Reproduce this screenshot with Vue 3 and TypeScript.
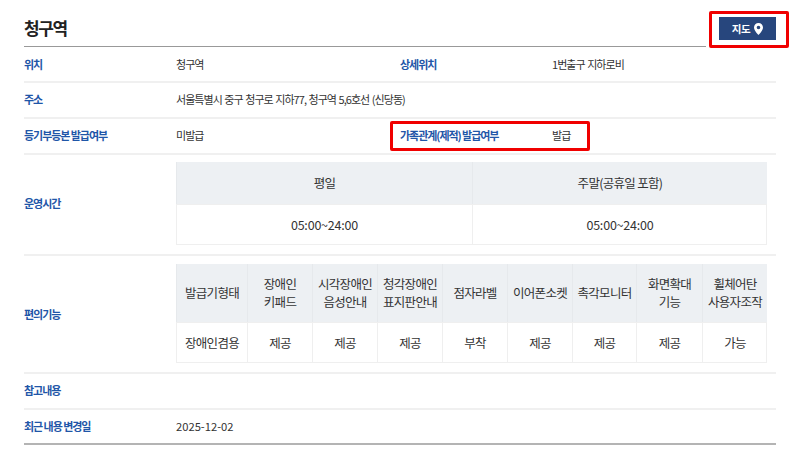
<script setup lang="ts">
const features: { head: string[]; value: string }[] = [
  { head: ['발급기형태'], value: '장애인겸용' },
  { head: ['장애인', '키패드'], value: '제공' },
  { head: ['시각장애인', '음성안내'], value: '제공' },
  { head: ['청각장애인', '표지판안내'], value: '제공' },
  { head: ['점자라벨'], value: '부착' },
  { head: ['이어폰소켓'], value: '제공' },
  { head: ['촉각모니터'], value: '제공' },
  { head: ['화면확대', '기능'], value: '제공' },
  { head: ['휠체어탄', '사용자조작'], value: '가능' },
]
</script>

<template>
  <div class="page">
    <header class="top">
      <h1 class="title">청구역</h1>
      <button class="map" type="button">
        <span>지도</span>
        <svg width="9" height="12" viewBox="0 0 9 12" aria-hidden="true">
          <path fill-rule="evenodd" fill="#fff" d="M4.5 0C2 0 0 2 0 4.5 0 7.5 4.5 12 4.5 12S9 7.500 9 4.500C9 2 7 0 4.500 0ZM4.500 2.700a1.800 1.800 0 1 1 0 3.600 1.800 1.800 0 0 1 0-3.600Z" />
        </svg>
      </button>
    </header>

    <div class="row h36 first">
      <div class="label">위치</div>
      <div class="value half">청구역</div>
      <div class="label">상세위치</div>
      <div class="value">1번출구 지하로비</div>
    </div>
    <div class="row h36">
      <div class="label">주소</div>
      <div class="value">서울특별시 중구 청구로 지하77, 청구역 5,6호선 (신당동)</div>
    </div>
    <div class="row h36">
      <div class="label">등기부등본 발급여부</div>
      <div class="value half">미발급</div>
      <div class="label">가족관계(제적) 발급여부</div>
      <div class="value">발급</div>
    </div>
    <div class="row hours">
      <div class="label">운영시간</div>
      <div class="grid two">
        <div class="th h42">평일</div>
        <div class="th h42">주말(공휴일 포함)</div>
        <div class="td num">05:00~24:00</div>
        <div class="td num">05:00~24:00</div>
      </div>
    </div>
    <div class="row features">
      <div class="label">편의기능</div>
      <div class="grid nine">
        <div v-for="(f, i) in features" :key="'h' + i" class="th h58">
          <div v-for="line in f.head" :key="line">{{ line }}</div>
        </div>
        <div v-for="(f, i) in features" :key="'v' + i" class="td">{{ f.value }}</div>
      </div>
    </div>
    <div class="row h36">
      <div class="label">참고내용</div>
    </div>
    <div class="row h35 last">
      <div class="label">최근 내용 변경일</div>
      <div class="value date">2025-12-02</div>
    </div>

    <div class="mark mark-map"></div>
    <div class="mark mark-family"></div>
  </div>
</template>

<style>
html, body { margin: 0; background: #fff; }
</style>

<style scoped>
.page {
  position: relative;
  width: 800px;
  height: 458px;
  box-sizing: border-box;
  padding: 11px 24px 0;
  overflow: hidden;
  font-family: "Noto Sans CJK KR", "Noto Sans", sans-serif;
  font-size: 11px;
  letter-spacing: -0.95px;
  word-spacing: 1px;
  color: #333;
}
.top {
  display: flex;
  align-items: flex-start;
  justify-content: space-between;
  height: 36px;
  box-sizing: border-box;
  position: relative;
}
.top::after {
  content: "";
  position: absolute;
  left: 0;
  right: 70px;
  bottom: 0;
  height: 1px;
  background: #999;
}
.title {
  margin: 0;
  padding-top: 5px;
  font-size: 17px;
  line-height: 24px;
  font-weight: 700;
  color: #222;
  letter-spacing: -1.4px;
}
.map {
  margin-top: 6px;
  width: 57px;
  height: 23px;
  border: 0;
  padding: 0;
  background: #27467d;
  color: #fff;
  font: inherit;
  font-weight: 700;
  font-size: 10.500px;
  letter-spacing: -0.4px;
  display: flex;
  align-items: center;
  justify-content: center;
  gap: 4px;
}
.row {
  display: flex;
  align-items: center;
  box-sizing: border-box;
  padding-bottom: 2px;
  border-bottom: 2px solid #f0f0f0;
}
.first { padding-bottom: 0; }
.h36 { height: 36px; }
.h35 { height: 35px; }
.last { border-bottom-color: #b4b4b4; }
.label {
  width: 152px;
  flex: none;
  color: #1f56a8;
  font-weight: 700;
  letter-spacing: -1.05px;
  word-spacing: 0;
}
.value { color: #333; }
.date { letter-spacing: 0; font-size: 11.200px; }
.half { width: 224px; flex: none; }
.hours { height: 101px; padding-top: 7px; padding-bottom: 0; align-items: flex-start; }
.features { height: 118px; padding-top: 8px; padding-bottom: 0; align-items: flex-start; }
.hours .label { align-self: center; margin-top: -11px; }
.features .label { align-self: center; margin-top: -8px; }
.grid {
  display: grid;
  width: 591px;
  border-right: 1px solid #efefef;
  border-bottom: 1px solid #efefef;
  box-sizing: border-box;
  font-size: 12.500px;
  letter-spacing: -0.7px;
  word-spacing: 0;
  text-align: center;
}
.two { grid-template-columns: 296px 295px; }
.nine { grid-template-columns: 71px 65px 65px 65px 65px 65px 64px 66px 65px; }
.th, .td {
  box-sizing: border-box;
  display: flex;
  flex-direction: column;
  align-items: center;
  justify-content: center;
  border-left: 1px solid #efefef;
  white-space: nowrap;
}
.th { background: #edf0f3; border-left-color: #e6e9ec; line-height: 18px; }
.td { height: 40px; border-top: 1px solid #efefef; }
.num { letter-spacing: -0.2px; }
.h42 { height: 42px; }
.h58 { height: 58px; }
.mark {
  position: absolute;
  box-sizing: border-box;
  border: 3px solid #f00000;
  border-radius: 2px;
  pointer-events: none;
}
.mark-map { left: 709px; top: 11px; width: 80px; height: 37px; }
.mark-family { left: 390px; top: 121px; width: 200px; height: 30px; }
</style>
